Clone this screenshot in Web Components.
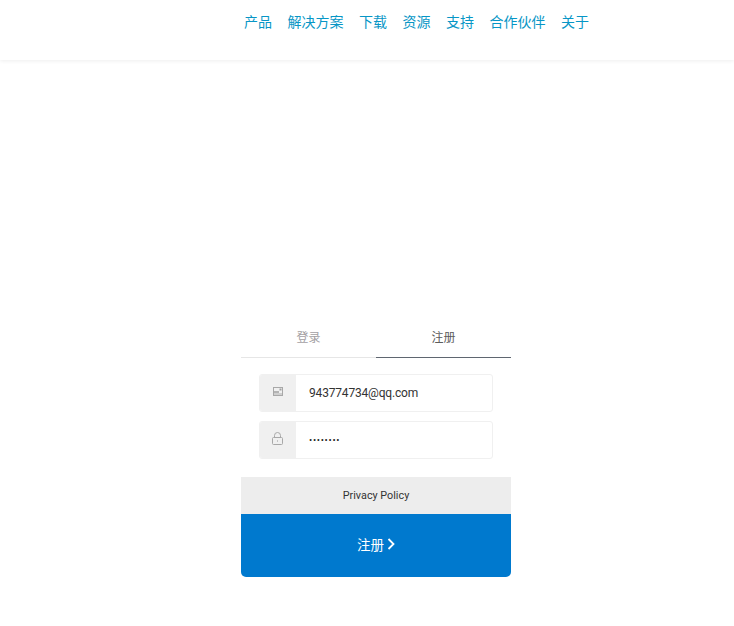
<!DOCTYPE html>
<html lang="zh">
<head>
<meta charset="utf-8">
<title>注册</title>
<style>
  html, body { margin: 0; padding: 0; background: #fff; }
  body { font-family: Roboto, "Noto Sans CJK SC", sans-serif; width: 734px; height: 626px; overflow: hidden; }
</style>
</head>
<body>
<site-header>
  <nav-link>产品</nav-link>
  <nav-link>解决方案</nav-link>
  <nav-link>下载</nav-link>
  <nav-link>资源</nav-link>
  <nav-link>支持</nav-link>
  <nav-link>合作伙伴</nav-link>
  <nav-link>关于</nav-link>
</site-header>
<auth-form>
  <auth-tab slot="tabs">登录</auth-tab>
  <auth-tab slot="tabs" active>注册</auth-tab>
  <form-field icon="card" value="943774734@qq.com"></form-field>
  <form-field icon="lock" value="••••••••" secret></form-field>
</auth-form>

<script>
const headerTemplate = document.createElement('template');
headerTemplate.innerHTML = `
  <style>
    :host {
      display: flex;
      box-sizing: border-box;
      height: 60px;
      padding: 13px 0 0 244px;
      gap: 15.5px;
      align-items: flex-start;
      background: #fff;
      box-shadow: 0 1px 4px rgba(0, 0, 0, 0.07);
    }
  </style>
  <slot></slot>
`;

class SiteHeader extends HTMLElement {
    connectedCallback() {
        const root = this.attachShadow({ mode: 'open' });
        root.appendChild(headerTemplate.content.cloneNode(true));
    }
}

const navLinkTemplate = document.createElement('template');
navLinkTemplate.innerHTML = `
  <style>
    :host {
      display: block;
      font-size: 14px;
      line-height: 18px;
      color: #0796c6;
      cursor: pointer;
    }
  </style>
  <slot></slot>
`;

class NavLink extends HTMLElement {
    connectedCallback() {
        const root = this.attachShadow({ mode: 'open' });
        root.appendChild(navLinkTemplate.content.cloneNode(true));
    }
}

const formTemplate = document.createElement('template');
formTemplate.innerHTML = `
  <style>
    :host {
      display: block;
      width: 270px;
      margin: 260px 0 0 241px;
    }

    .tabs {
      display: grid;
      grid-template-columns: 135px 135px;
    }

    .fields {
      display: flex;
      flex-direction: column;
      gap: 9px;
      padding: 16px 18px 18px;
    }

    .privacy {
      display: flex;
      align-items: center;
      justify-content: center;
      height: 37px;
      background: #ededed;
      font-size: 10.8px;
      color: #333;
    }

    .submit {
      display: flex;
      align-items: center;
      justify-content: center;
      gap: 3px;
      box-sizing: border-box;
      height: 63px;
      padding-bottom: 3px;
      background: #0079ce;
      color: #fff;
      font-size: 13.5px;
      border-radius: 0 0 5px 5px;
      cursor: pointer;
    }

    .submit svg { width: 8px; height: 12px; }
  </style>
  <div class="tabs"><slot name="tabs"></slot></div>
  <div class="fields"><slot></slot></div>
  <div class="privacy">Privacy Policy</div>
  <div class="submit">
    <span>注册</span>
    <svg viewBox="0 0 8 12"><path d="M1.5 1 L6.5 6 L1.5 11" fill="none" stroke="#fff" stroke-width="1.8"/></svg>
  </div>
`;

class AuthForm extends HTMLElement {
    connectedCallback() {
        const root = this.attachShadow({ mode: 'open' });
        root.appendChild(formTemplate.content.cloneNode(true));
    }
}

const tabTemplate = document.createElement('template');
tabTemplate.innerHTML = `
  <style>
    :host {
      display: block;
      box-sizing: border-box;
      height: 38px;
      line-height: 36px;
      text-align: center;
      font-size: 12px;
      color: #a3a0a3;
      border-bottom: 1px solid #e6e6e6;
      cursor: pointer;
    }
    :host([active]) {
      color: #5c5c5c;
      border-bottom-color: #5f6670;
    }
  </style>
  <slot></slot>
`;

const icons = {
    card: `<svg width="10" height="9" viewBox="0 0 10 9">
      <rect x="0.5" y="0.5" width="9" height="8" fill="none" stroke="#a8a8a8"/>
      <rect x="1" y="4" width="5" height="2" fill="#b4b4b4"/>
      <rect x="1" y="6" width="8" height="2" fill="#cfcfcf"/>
      <rect x="6.5" y="1.5" width="2" height="2" fill="#a0a0a0"/>
    </svg>`,
    lock: `<svg width="11" height="13" viewBox="0 0 11 13">
      <path d="M2.5 5.5 V3.5 a3 3 0 0 1 6 0 V5.5" fill="none" stroke="#a8a8a8"/>
      <rect x="0.5" y="5.5" width="10" height="7" rx="1" fill="none" stroke="#a8a8a8"/>
      <rect x="5" y="8" width="1" height="2" fill="#c4c4c4"/>
    </svg>`
};

class AuthTab extends HTMLElement {
    connectedCallback() {
        const root = this.attachShadow({ mode: 'open' });
        root.appendChild(tabTemplate.content.cloneNode(true));
    }
}

class FormField extends HTMLElement {
    connectedCallback() {
        const root = this.attachShadow({ mode: 'open' });
        const secret = this.hasAttribute('secret');
        root.innerHTML = `
          <style>
            :host {
              display: flex;
              box-sizing: border-box;
              height: 38px;
              border: 1px solid #f0f0f0;
              border-radius: 3px;
              overflow: hidden;
            }
            .icon {
              display: flex;
              align-items: center;
              justify-content: center;
              box-sizing: border-box;
              width: 36px;
              padding: 0 1px 3px 0;
              background: #f0f0f0;
            }
            .value {
              flex: 1;
              display: flex;
              align-items: center;
              padding-left: 13px;
              font-size: 12px;
              letter-spacing: -0.18px;
              color: #333;
            }
            .value.secret {
              padding-bottom: 1px;
              font-size: 9.5px;
              letter-spacing: 0.7px;
              color: #222;
            }
          </style>
          <div class="icon">${icons[this.getAttribute('icon')]}</div>
          <div class="value ${secret ? 'secret' : ''}">${this.getAttribute('value')}</div>
        `;
    }
}

customElements.define('site-header', SiteHeader);
customElements.define('nav-link', NavLink);
customElements.define('auth-form', AuthForm);
customElements.define('auth-tab', AuthTab);
customElements.define('form-field', FormField);
</script>
</body>
</html>
